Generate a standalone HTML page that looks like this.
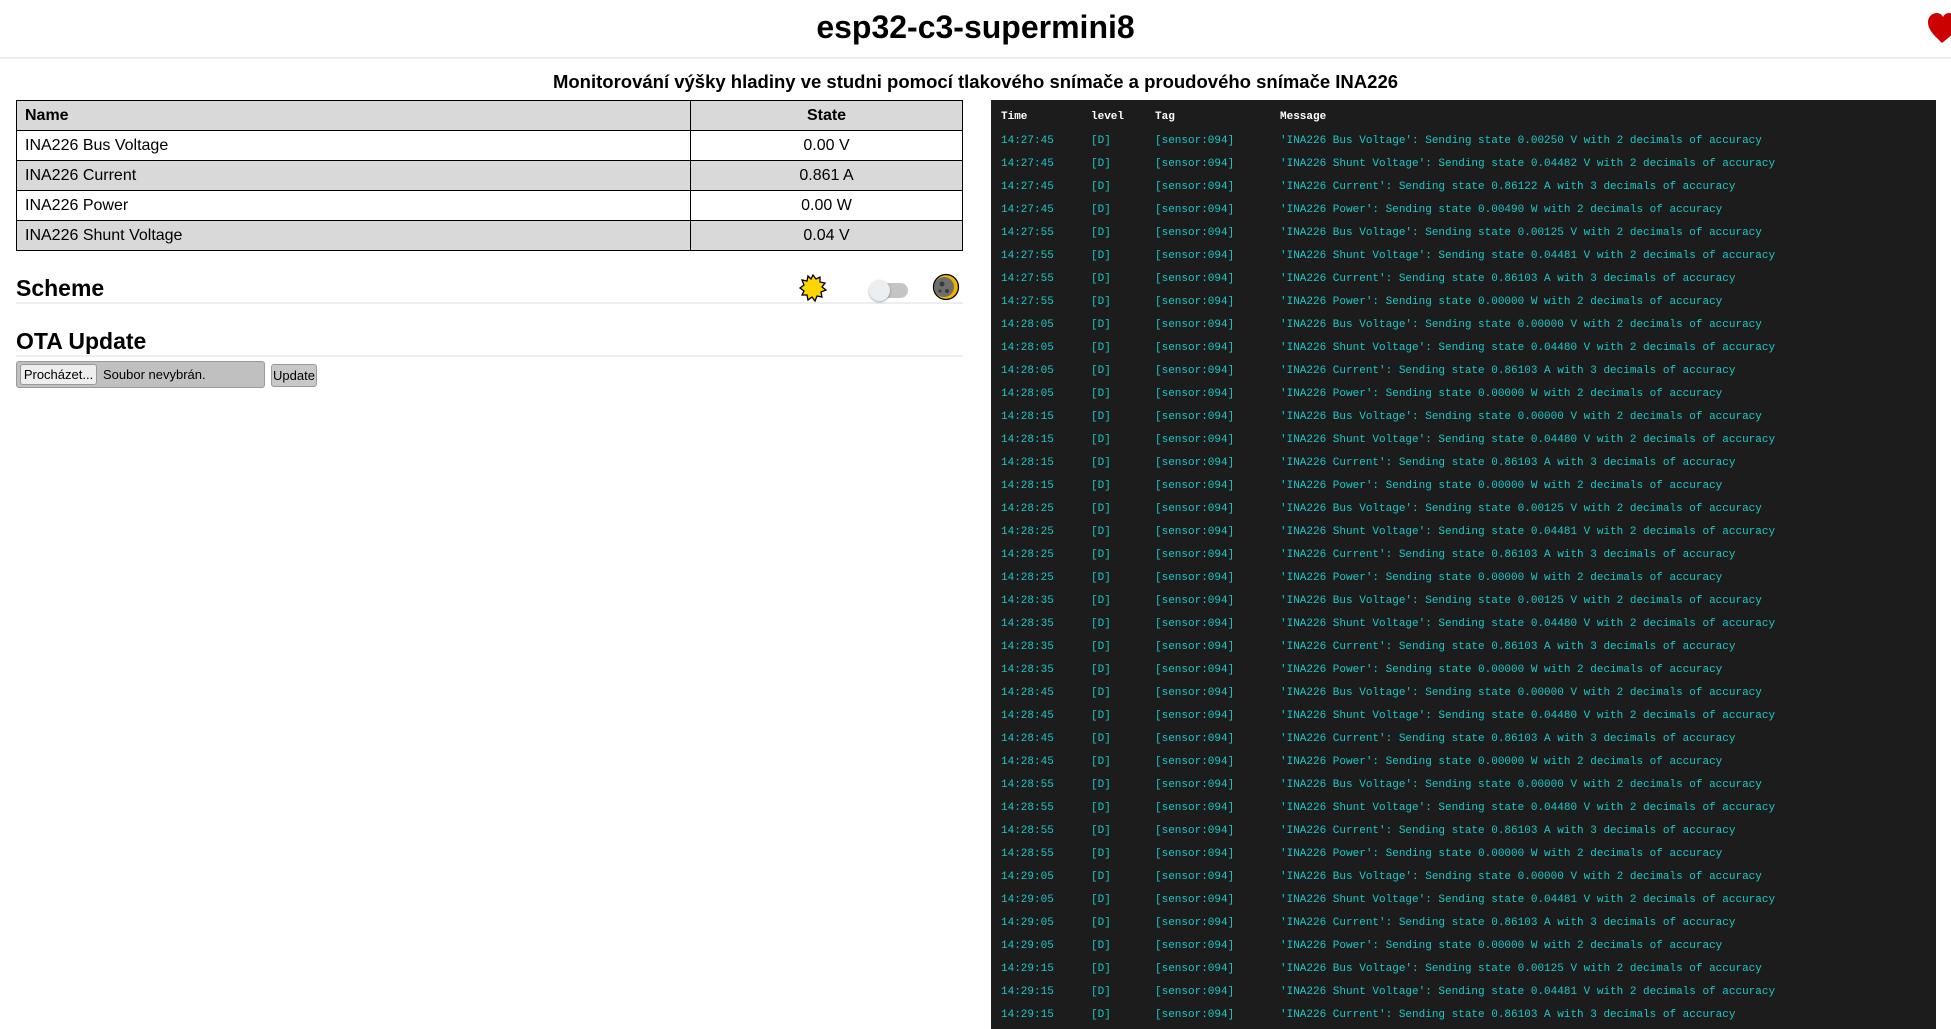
<!DOCTYPE html>
<html><head><meta charset="utf-8"><style>
*{box-sizing:border-box;margin:0;padding:0}
body{width:1951px;height:1029px;overflow:hidden;background:#fff;font-family:"Liberation Sans","DejaVu Sans",sans-serif;color:#000;position:relative}
.abs{position:absolute}
h1{position:absolute;left:0;width:1951px;top:7px;text-align:center;font-size:32px;font-weight:bold;line-height:40px}
.hl{position:absolute;left:0;width:1951px;top:57px;height:2px;background:#eee}
h3{position:absolute;left:0;width:1951px;top:70px;text-align:center;font-size:18.5px;font-weight:bold;line-height:24px}
table{position:absolute;left:16px;top:100px;width:947px;border-collapse:collapse;font-size:16px}
td,th{border:1.5px solid #000;height:30px;padding:0 8px;font-weight:normal}
th{font-weight:bold}
.g{background:#d9d9d9}
td:nth-child(2),th:nth-child(2){text-align:center;width:272px}
td:first-child,th:first-child{text-align:left}
h2{position:absolute;left:16px;font-size:23px;font-weight:bold}
.ln{position:absolute;left:16px;width:947px;height:2px;background:#eee}
#log{position:absolute;left:991px;top:100px;width:945px;height:929px;background:#1c1c1c;font-family:"Liberation Mono","DejaVu Sans Mono",monospace;font-size:11px;color:#1bc8c8;white-space:pre}
.r{position:absolute;height:23px;line-height:23px}
.c1{left:10px}.c2{left:100px}.c3{left:164px}.c4{left:289px}
.hd{color:#fff;font-weight:bold}
</style></head><body>
<h1>esp32-c3-supermini8</h1>
<svg class="abs" style="left:1926px;top:12px" width="30" height="32" viewBox="0 0 30 32"><path d="M16 31 C8 23 2 18 2 10 C2 4 7 1 11 1 C14 1 16 3 17 5 C18 3 20 1 23 1 C27 1 32 4 32 10 C32 18 26 23 16 31Z" fill="#cc0000"/></svg>
<div class="hl"></div>
<h3>Monitorování výšky hladiny ve studni pomocí tlakového snímače a proudového snímače INA226</h3>
<table>
<tr class="g"><th>Name</th><th>State</th></tr>
<tr><td>INA226 Bus Voltage</td><td>0.00 V</td></tr>
<tr class="g"><td>INA226 Current</td><td>0.861 A</td></tr>
<tr><td>INA226 Power</td><td>0.00 W</td></tr>
<tr class="g"><td>INA226 Shunt Voltage</td><td>0.04 V</td></tr>
</table>
<h2 style="top:275px">Scheme</h2>
<div class="ln" style="top:302px"></div>
<svg class="abs" style="left:798px;top:273px" width="30" height="30" viewBox="-15 -15 30 30"><polygon points="0,-13 3,-9 7,-11 7,-6 12,-5 9,-1 13,2 8,4 9,9 4,8 2,13 -1,9 -5,12 -6,7 -11,7 -9,3 -13,0 -9,-3 -11,-8 -6,-7 -5,-12 -2,-9" fill="#ffd700" stroke="#000" stroke-width="1.3"/></svg>
<div class="abs" style="left:872px;top:283px;width:36px;height:15px;border-radius:8px;background:#c4c4c4"></div>
<div class="abs" style="left:869px;top:280px;width:21px;height:21px;border-radius:50%;background:#eceff1;box-shadow:0 1px 2px rgba(0,0,0,.35)"></div>
<svg class="abs" style="left:932px;top:273px" width="28" height="28" viewBox="-14 -14 28 28"><circle r="12.5" fill="#f0b400" stroke="#000" stroke-width="1.3"/><circle cx="-2" r="10" fill="#6e6e6e"/><circle cx="-4" cy="-3" r="2.5" fill="#3a3a3a"/><circle cx="1" cy="4" r="2" fill="#3a3a3a"/><circle cx="-6" cy="4" r="1.5" fill="#3a3a3a"/></svg>
<h2 style="top:328px">OTA Update</h2>
<div class="ln" style="top:355px"></div>
<div class="abs" style="left:16px;top:361px;width:249px;height:27px;background:#c0c0c0;border:1px solid #999;border-radius:3px;font-size:13px;line-height:25px"><span class="abs" style="left:3px;top:2px;width:77px;height:21px;background:#eee;border:1px solid #999;border-radius:3px;line-height:19px;text-align:center">Procházet...</span><span class="abs" style="left:86px;top:0">Soubor nevybrán.</span></div>
<div class="abs" style="left:271px;top:364px;width:46px;height:23px;background:#c8c8c8;border:1px solid #999;border-radius:3px;font-size:13px;line-height:21px;text-align:center">Update</div>
<div id="log">
<div class="r hd" style="top:6px"><span class="abs c1">Time</span><span class="abs c2">level</span><span class="abs c3">Tag</span><span class="abs c4">Message</span></div>
</div>
<script>
var d=[["14:27:45","0.00250","0.04482","0.86122","0.00490"],["14:27:55","0.00125","0.04481","0.86103","0.00000"],["14:28:05","0.00000","0.04480","0.86103","0.00000"],["14:28:15","0.00000","0.04480","0.86103","0.00000"],["14:28:25","0.00125","0.04481","0.86103","0.00000"],["14:28:35","0.00125","0.04480","0.86103","0.00000"],["14:28:45","0.00000","0.04480","0.86103","0.00000"],["14:28:55","0.00000","0.04480","0.86103","0.00000"],["14:29:05","0.00000","0.04481","0.86103","0.00000"],["14:29:15","0.00125","0.04481","0.86103","0.00000"]];
var h="",i=0;
d.forEach(function(g){var m=["'INA226 Bus Voltage': Sending state "+g[1]+" V with 2 decimals of accuracy","'INA226 Shunt Voltage': Sending state "+g[2]+" V with 2 decimals of accuracy","'INA226 Current': Sending state "+g[3]+" A with 3 decimals of accuracy","'INA226 Power': Sending state "+g[4]+" W with 2 decimals of accuracy"];
m.forEach(function(s){if(i<39){h+='<div class="r" style="top:'+(30+i*23)+'px"><span class="abs c1">'+g[0]+'</span><span class="abs c2">[D]</span><span class="abs c3">[sensor:094]</span><span class="abs c4">'+s+'</span></div>';}i++;});});
document.getElementById("log").insertAdjacentHTML("beforeend",h);
</script>
</body></html>
